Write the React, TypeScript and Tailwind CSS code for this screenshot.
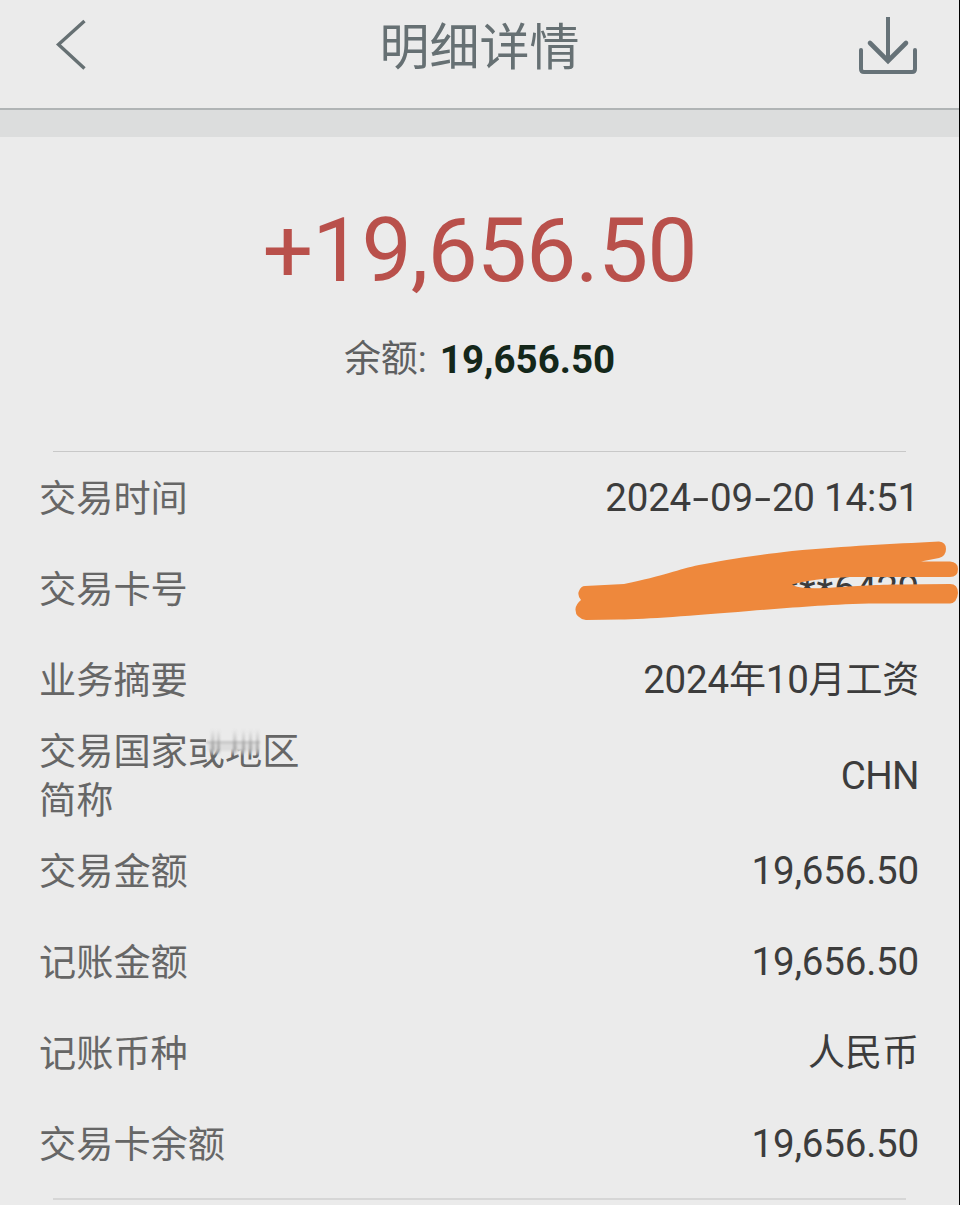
import type { ReactNode } from 'react'

const rows: { label: string; value: ReactNode; tall?: boolean }[] = [
  { label: '交易时间', value: <DateTime /> },
  { label: '交易卡号', value: <CardNumber /> },
  { label: '业务摘要', value: <Summary /> },
  { label: '交易国家或地区简称', value: <span className="tracking-[-0.6px]">CHN</span>, tall: true },
  { label: '交易金额', value: <Amount /> },
  { label: '记账金额', value: <Amount /> },
  { label: '记账币种', value: <span className="text-[37px]">人民币</span> },
  { label: '交易卡余额', value: <Amount /> },
]

export default function App() {
  return (
    <div className="flex flex-col w-[960px] h-[1205px] overflow-hidden border-r border-black bg-[#ebebeb] font-['Roboto','Noto_Sans_CJK_SC',sans-serif]">
      {/* Header */}
      <header className="flex items-center justify-between h-[110px] flex-shrink-0 pl-[54px] pr-[41px] pb-[17px] border-b-2 border-[#b0b4b5]">
        <button className="w-[60px]">
          <svg width="36" height="56" viewBox="0 0 36 56" fill="none" stroke="#667073" strokeWidth="3.4">
            <path d="M30.5 3 L4.5 26.500 L30.5 50.5" />
          </svg>
        </button>
        <h1 className="mr-[13px] pt-[4px] text-[50px] leading-none text-[#667073]">明细详情</h1>
        <button className="w-[60px]">
          <svg width="60" height="60" viewBox="0 0 60 60" fill="none" stroke="#667278" strokeWidth="4">
            <path d="M30 1 V46" />
            <path d="M12 27 L30 45 L48 27" strokeWidth="4.6" strokeLinecap="round" />
            <path d="M3 34 V53 Q3 56 6 56 H54 Q57 56 57 53 V34" strokeLinecap="round" />
          </svg>
        </button>
      </header>
      <div className="h-[27px] flex-shrink-0 bg-[#dcdddd]" />

      {/* Amount */}
      <section className="flex flex-col items-center h-[314px] flex-shrink-0 pt-[69px]">
        <div className="flex items-center text-[89.5px] leading-[90px] tracking-[-1px] text-[#b9504b]">
          +19,656.50
        </div>
        <div className="flex items-center mt-[39px] h-[50px] text-[37px]">
          <span className="text-[#5e6061]">余额:</span>
          <span className="ml-[13px] text-[38.5px] font-bold text-[#14271a]">19,656.50</span>
        </div>
      </section>

      {/* Details */}
      <div className="h-px flex-shrink-0 ml-[53px] mr-[53px] bg-[#c8c8c8]" />
      <dl className="flex flex-col pl-[39px] pr-[40px]">
        {rows.map((row) => (
          <div
            key={row.label}
            className={`flex items-center justify-between ${row.tall ? 'h-[100px]' : 'h-[91px]'}`}
          >
            <dt className="relative w-[265px] pt-[3px] text-[37.2px] leading-[49px] text-[#666]">
              {row.label}
              {row.tall && <Smudge />}
            </dt>
            <dd className="text-[38.5px] leading-[49px] text-[#3c3c3c] whitespace-nowrap">{row.value}</dd>
          </div>
        ))}
      </dl>
      <div className="h-[2px] flex-shrink-0 mt-[9px] ml-[53px] mr-[53px] bg-[#d6d6d6]" />
    </div>
  )
}

function Amount() {
  return <span className="tracking-[-0.2px]">19,656.50</span>
}

function Hyphen() {
  return <span className="inline-block w-[19px] text-center scale-x-[1.55]">-</span>
}

function DateTime() {
  return (
    <span className="tracking-[-0.2px]">
      2024
      <Hyphen />
      09
      <Hyphen />
      20 14:51
    </span>
  )
}

function Summary() {
  return (
    <span className="tracking-[-0.2px]">
      2024<span className="text-[37px]">年</span>10<span className="text-[37px]">月工资</span>
    </span>
  )
}

// the card number is scribbled over, only a sliver of the digits shows
function CardNumber() {
  return (
    <span className="relative flex h-[49px]">
      <span className="pt-[3px] tracking-[1px]">***</span>
      <span className="tracking-[-0.4px]">6429</span>
      <svg
        className="absolute right-[-40px] top-[-25px]"
        width="400"
        height="100"
        viewBox="560 539 400 100"
        fill="#ee883c"
      >
        <path d="M586 586 L625 584 C665 576 680 569 700 565 C740 557 760 555 793 551 C850 546 890 544 940 541.5 Q947 542 947 549 Q947 556 940 558 L922 561.5 H951 Q959 562 959 569 Q959 577 951 577 H860 C835 577 815 579 793 584.5 Q798 589 825 588 C860 586 880 584.5 900 584.5 L951 584 Q959 584 959 593 Q958 603 951 603.5 H870 C820 605 790 608 750 611 C690 616 650 619 620 619.5 L587 620 Q576 618 576.500 609 Q577 604 582 600 Q578 595 580 591 Q582 586 586 586 Z" />
      </svg>
    </span>
  )
}

function Smudge() {
  return (
    <svg className="absolute left-[164px] top-0" width="62" height="34" viewBox="0 0 62 34">
      <defs>
        <linearGradient id="cover" x1="0" y1="0" x2="0" y2="1">
          <stop offset="0.75" stopColor="#ebebeb" />
          <stop offset="1" stopColor="#ebebeb" stopOpacity="0" />
        </linearGradient>
        <linearGradient id="streak" x1="0" y1="0" x2="0" y2="1">
          <stop offset="0" stopColor="#888" stopOpacity="0" />
          <stop offset="0.8" stopColor="#888" stopOpacity="0.6" />
          <stop offset="1" stopColor="#888" stopOpacity="0.2" />
        </linearGradient>
        <filter id="soft" x="-10%" y="-10%" width="120%" height="120%">
          <feGaussianBlur stdDeviation="1" />
        </filter>
      </defs>
      <rect x="3" width="57" height="31" fill="url(#cover)" />
      <g filter="url(#soft)">
        <rect x="3" y="16" width="54" height="2.500" fill="#999" opacity="0.45" />
        <rect x="5" y="18" width="50" height="8" fill="#aaa" opacity="0.22" />
        <g fill="url(#streak)">
          <rect x="8" y="4" width="3.500" height="25" />
          <rect x="14" y="4" width="3" height="25" />
          <rect x="30" y="4" width="3.500" height="25" />
          <rect x="39" y="4" width="3" height="25" />
          <rect x="46" y="4" width="3" height="25" />
          <rect x="53" y="4" width="3" height="25" />
        </g>
      </g>
    </svg>
  )
}
